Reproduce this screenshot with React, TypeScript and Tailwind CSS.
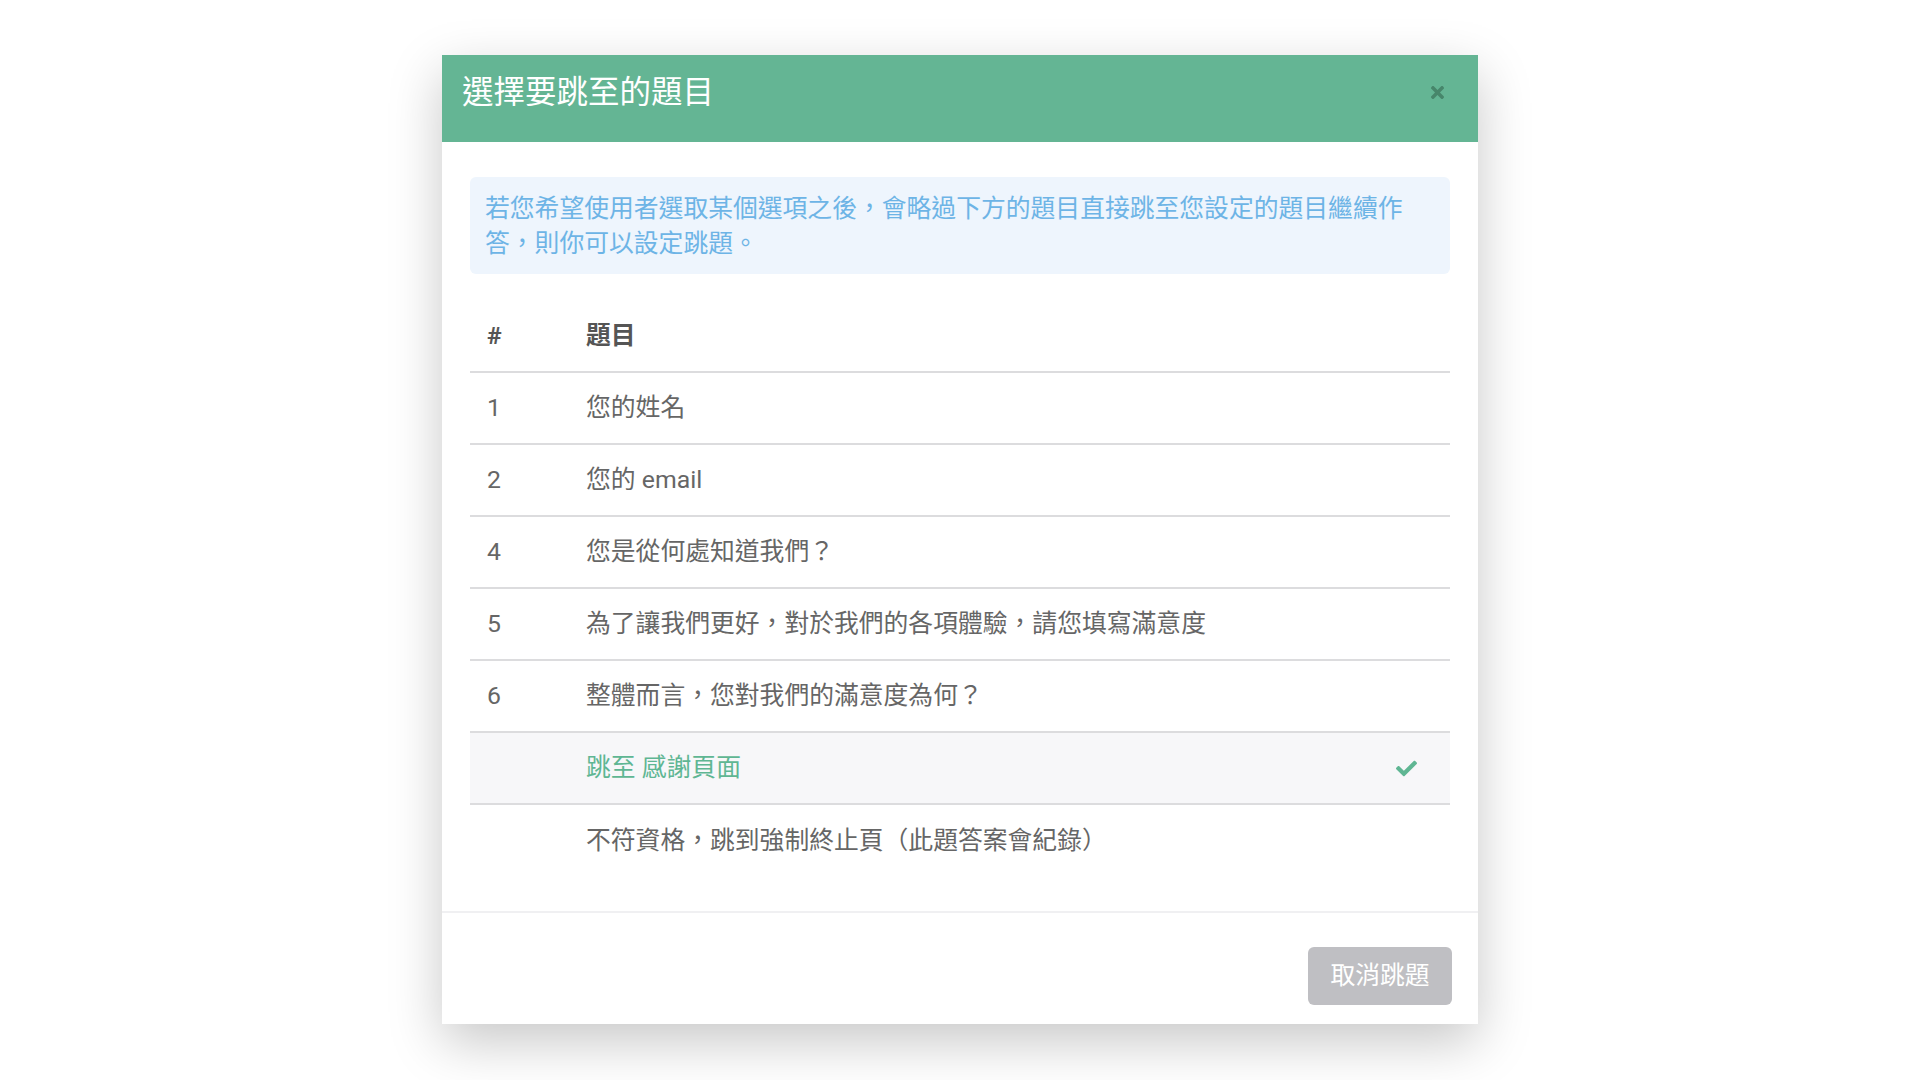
import { FaCheck, FaTimes } from 'react-icons/fa'

interface Question {
  no: string
  title: string
}

const QUESTIONS: Question[] = [
  { no: '1', title: '您的姓名' },
  { no: '2', title: '您的 email' },
  { no: '4', title: '您是從何處知道我們？' },
  { no: '5', title: '為了讓我們更好，對於我們的各項體驗，請您填寫滿意度' },
  { no: '6', title: '整體而言，您對我們的滿意度為何？' },
]

function Row({ no, title, selected, last }: { no: string; title: string; selected?: boolean; last?: boolean }) {
  return (
    <div
      className={`grid grid-cols-[116px_1fr_auto] items-center h-[72px] ${last ? '' : 'border-b-2 border-[#dcdcde]'} ${selected ? 'bg-[#f7f7f9]' : ''}`}
    >
      <span className="pl-[17px] text-[#666]">{no}</span>
      <span className={selected ? 'text-[#5fb693]' : 'text-[#666]'}>{title}</span>
      <span className="pr-[33px]">{selected && <FaCheck size={21} className="text-[#5fb693]" />}</span>
    </div>
  )
}

export default function App() {
  return (
    <div className="min-h-screen bg-white pt-[55px] font-['Roboto','Noto_Sans_CJK_TC',sans-serif] text-[24.8px]">
      <div className="mx-auto w-[1036px] bg-white shadow-[0_18px_50px_rgba(0,0,0,0.22)]">
        <div className="flex h-[87px] items-start justify-between bg-[#64b594] pl-[20px] pr-[31px] pt-[19px]">
          <h2 className="text-[31.5px] leading-[37px] text-white">選擇要跳至的題目</h2>
          <button className="flex h-[37px] items-center text-[#47866b]">
            <FaTimes size={19} />
          </button>
        </div>

        <div className="px-[28px] pt-[35px] pb-[34px]">
          <div className="rounded-[6px] bg-[#eef5fd] pl-[15px] pr-[40px] pt-[14px] pb-[13px] leading-[35px] text-[#6db4e6]">
            若您希望使用者選取某個選項之後，會略過下方的題目直接跳至您設定的題目繼續作答，則你可以設定跳題。
          </div>

          <div className="mt-[27px]">
            <div className="grid grid-cols-[116px_1fr] items-center h-[72px] border-b-2 border-[#dcdcde] font-bold text-[#555]">
              <span className="pl-[17px]">#</span>
              <span>題目</span>
            </div>
            {QUESTIONS.map((q) => (
              <Row key={q.no} no={q.no} title={q.title} />
            ))}
            <Row no="" title="跳至 感謝頁面" selected />
            <Row no="" title="不符資格，跳到強制終止頁（此題答案會紀錄）" last />
          </div>
        </div>

        <div className="flex justify-end border-t-2 border-[#f0f0f2] px-[26px] pt-[34px] pb-[19px]">
          <button className="h-[58px] w-[144px] rounded-[6px] bg-[#bfbfc3] text-white">取消跳題</button>
        </div>
      </div>
    </div>
  )
}
